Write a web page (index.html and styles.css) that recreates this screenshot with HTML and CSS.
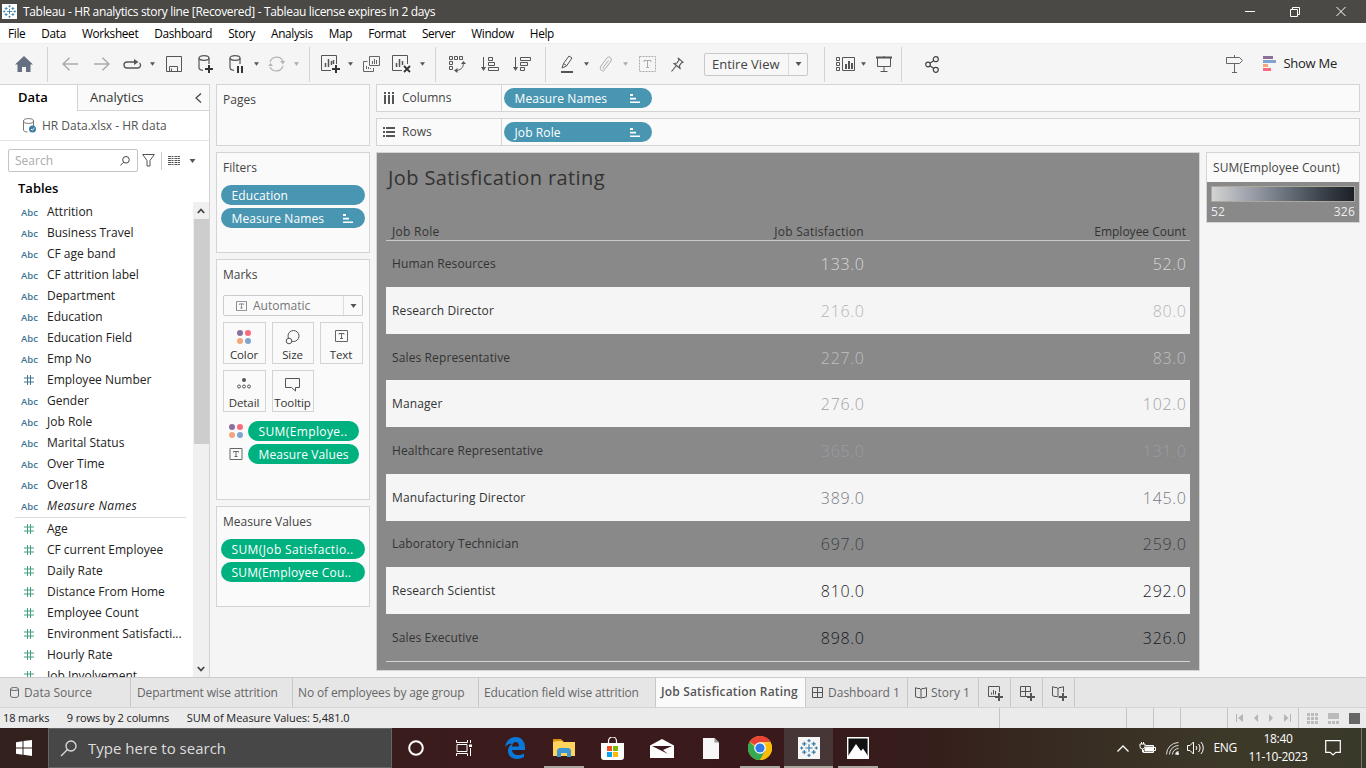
FILE: index.html
```html
<!DOCTYPE html>
<html lang="en"><head><meta charset="utf-8"><title>Tableau</title><link rel="stylesheet" href="styles.css"></head>
<body>
<svg width="0" height="0" class="defs"><defs>
<symbol id="caret" viewBox="0 0 6 4"><path d="M0 0h6L3 4z" fill="#555"/></symbol>
<symbol id="hash" viewBox="0 0 10 10"><path d="M3.5 0v10M6.5 0v10M0 3h10M0 7h10" fill="none" stroke="currentColor"/></symbol>
<symbol id="sortmini" viewBox="0 0 10 9"><path d="M0 0h3v2H0zM0 3.7h6v1.8H0zM0 7.5h10V9H0z" fill="#fff"/></symbol>
<symbol id="tbox" viewBox="0 0 13 12"><path d="M.5.5h12v11H.5z" fill="none" stroke="currentColor"/><path d="M4 4.5V3.5h5v1M6.5 3.5v5M5 8.5h3" fill="none" stroke="currentColor"/></symbol>
<symbol id="dots" viewBox="0 0 14 14"><circle cx="3" cy="3" r="3" fill="#8a7199"/><circle cx="11" cy="3" r="3" fill="#f96a7c"/><circle cx="3" cy="11" r="3" fill="#f2a679"/><circle cx="11" cy="11" r="3" fill="#82a3cc"/></symbol>
<symbol id="tableau" viewBox="0 0 18 18"><path d="M9 5.5v7M5.500 9h7M4.500 3v4M2.500 5h4M13.500 3v4M11.500 5h4M4.500 11v4M2.500 13h4M13.500 11v4M11.500 13h4M9 .5v3M7.500 2h3M9 14.500v3M7.500 16h3M.5 9h3M2 7.500v3M14.500 9h3M16 7.500v3" stroke="#377ba3" stroke-width="1.100"/></symbol>
</defs></svg>
<header class="titlebar"><svg class="logo" width="15" height="15" viewBox="-1 -1 20 20"><use href="#tableau" width="18" height="18"/></svg><span class="wtitle">Tableau - HR analytics story line [Recovered] - Tableau license expires in 2 days</span>
<svg class="winbtns" width="110" height="12" viewBox="0 0 110 12" fill="none" stroke="#fff"><path d="M0 5.500h10"/><path d="M45.500 3.500h7v7h-7zM47.500 3.500v-2h7v7h-2"/><path d="M91.500 1l9 9M100.500 1l-9 9"/></svg></header>
<nav class="menubar"><span>File</span><span>Data</span><span>Worksheet</span><span>Dashboard</span><span>Story</span><span>Analysis</span><span>Map</span><span>Format</span><span>Server</span><span>Window</span><span>Help</span></nav>
<div class="toolbar">
<i class="c47"><svg width="18" height="16"><path d="M9 0l9 8.500h-2.500V16h-4.500v-5h-4v5H2.500V8.500H0z" fill="#657180"/></svg></i><b class="sep"></b>
<i class="c32 gap6"><svg width="16" height="14" fill="none" stroke="#aaa" stroke-width="1.500"><path d="M16 7H1M7.500.7L1 7l6.500 6.300"/></svg></i>
<i class="c32"><svg width="16" height="14" fill="none" stroke="#aaa" stroke-width="1.500"><path d="M0 7h15M8.500.7L15 7l-6.500 6.300"/></svg></i>
<i class="c28"><svg width="19" height="10" fill="none" stroke="#555" stroke-width="1.300"><path d="M12 3H4a2.800 2.800 0 000 6h11a2.800 2.800 0 001.500-5"/><path d="M11 0l4.500 3L11 6z" fill="#555" stroke="none"/></svg></i>
<i class="c12"><svg width="5" height="4"><use href="#caret"/></svg></i>
<i class="c32"><svg width="16" height="16" fill="none" stroke="#555"><path d="M.5.5h15v15H.5zM3.500 15v-4.500h8V15M5.500 12.500v3"/></svg></i>
<i class="c32"><svg width="16" height="18" fill="none" stroke="#555" stroke-width="1.200"><ellipse cx="6" cy="3" rx="5" ry="2.300"/><path d="M1 3v10c0 1 1.500 2 4 2.300M11 3v6"/><path d="M11 10v8M7 14h8" stroke="#333" stroke-width="2"/></svg></i>
<i class="c28"><svg width="14" height="18" fill="none" stroke="#555" stroke-width="1.200"><ellipse cx="6" cy="3" rx="5" ry="2.300"/><path d="M1 3v10c0 1 1.500 2 4 2.300M11 3v6"/><path d="M9 11v7M13 11v7" stroke="#333" stroke-width="2"/></svg></i>
<i class="c12"><svg width="5" height="4"><use href="#caret"/></svg></i>
<i class="c28"><svg width="17" height="16" fill="none" stroke="#b5b5b5" stroke-width="1.200"><path d="M2 6a7 7 0 0113-1M15 10A7 7 0 012 11"/><path d="M12 5h5l-2 3.500zM0 10h5L2.500 7z" fill="#b5b5b5" stroke="none"/></svg></i>
<i class="c12 dim"><svg width="5" height="4"><use href="#caret"/></svg></i>
<b class="sep ml7"></b>
<i class="c28 gap6"><svg width="19" height="18" fill="none" stroke="#555"><path d="M15.500 9V.5H.5v15H10"/><path d="M4.500 12V8M7.500 12V4M10.500 10V6M12.500 9V5" stroke-width="1.500"/><path d="M15 10v8M11 14h8" stroke="#333" stroke-width="2"/></svg></i>
<i class="c12"><svg width="5" height="4"><use href="#caret"/></svg></i>
<i class="c30"><svg width="17" height="16" fill="none" stroke="#666"><path d="M6.500.5h10v9h-10zM4.500 5.500h-4v10h10V12M9.500 8V5M11.500 8V3M13.500 8V4M3.500 13v-3M5.500 13v-2M7.500 13v-1"/></svg></i>
<i class="c30"><svg width="19" height="18" fill="none" stroke="#555"><path d="M15.500 9V.5H.5v15H10"/><path d="M4.500 12V8M7.500 12V4M10.500 10V6" stroke-width="1.500"/><path d="M12 11l6 6M18 11l-6 6" stroke="#333" stroke-width="1.800"/></svg></i>
<i class="c12"><svg width="5" height="4"><use href="#caret"/></svg></i>
<b class="sep ml7"></b>
<i class="c30 gap6"><svg width="17" height="17" fill="none" stroke="#555"><path d="M.5.5h3v3h-3zM5.500.5h3v3h-3zM10.500.5h3v3h-3zM.5 5.500h3v3h-3zM.5 10.500h3v3h-3zM6 14.500c5 0 8.500-2 8.500-8"/><path d="M12 8l2.500-3L17 8zM8.500 12v5L5 14.500z" fill="#555" stroke="none"/></svg></i>
<i class="c30 gap3"><svg width="18" height="15" fill="none" stroke="#555"><path d="M2.500 0v12M7.500.5h4v3h-4zM7.500 5.500h6v3h-6zM7.500 10.500h10v3h-10z"/><path d="M0 10h5l-2.500 4z" fill="#555" stroke="none"/></svg></i>
<i class="c30 gap2"><svg width="18" height="15" fill="none" stroke="#555"><path d="M2.500 0v12M7.500.5h10v3h-10zM7.500 5.500h7v3h-7zM7.500 10.500h4v3h-4z"/><path d="M0 10h5l-2.500 4z" fill="#555" stroke="none"/></svg></i>
<b class="sep ml8"></b>
<i class="c28 gap7"><svg width="12" height="18" fill="none" stroke="#555"><path d="M1 13l1.500-4.500L8 1l3 2-5.500 8zM2.500 8.500l3 2"/><path d="M0 17h12" stroke-width="2"/></svg></i>
<i class="c11"><svg width="5" height="4"><use href="#caret"/></svg></i>
<i class="c27"><svg width="14" height="16" fill="none" stroke="#aaa"><path d="M9.500 4.500L4.500 11c-1 2 1 3 2 1.500L12 5c1.500-3-2-5.500-4-3L2 10c-2 3 .5 6 3.500 4.500"/></svg></i>
<i class="c12 dim"><svg width="5" height="4"><use href="#caret"/></svg></i>
<i class="c33"><svg width="17" height="16" fill="none" stroke="#aaa"><path d="M.5.5h16v15H.5z" stroke-dasharray="2 1"/><path d="M5 6V4.500h7V6M8.500 4.500v7M7 11.500h3"/></svg></i>
<i class="c27"><svg width="13" height="15" fill="none" stroke="#555" stroke-width="1.100"><path d="M7 .8l5 4.500-1.500.5-2 2.500.5 3L3 6.500l3-.5 2-3zM5 9l-4.500 5.500"/></svg></i>
<div class="combo"><span>Entire View</span><em><svg width="7" height="4"><use href="#caret"/></svg></em></div>
<b class="sep ml16"></b>
<i class="c27 gap7"><svg width="20" height="15" fill="none" stroke="#555"><path d="M.5.5h3v3h-3zM.5 5.500h3v3h-3zM.5 10.500h3v3h-3zM6.500.5h12v13h-12z"/><path d="M10 12V7M13 12V4M16 12V6" stroke-width="2"/></svg></i>
<i class="c8"><svg width="5" height="4"><use href="#caret"/></svg></i>
<i class="c34"><svg width="16" height="16" fill="none" stroke="#555"><path d="M0 1.500h16" stroke-width="2"/><path d="M1.500 2v8.500h13V2M8 10v5M4.500 15.500h7M8 0v1"/></svg></i>
<b class="sep"></b>
<i class="c28 gap17"><svg width="14" height="17" fill="none" stroke="#444" stroke-width="1.200"><circle cx="3" cy="8.500" r="2.300"/><circle cx="10.800" cy="3.200" r="2.500"/><circle cx="10.800" cy="13.800" r="2.500"/><path d="M5 7.200l3.500-2.500M5 9.800l3.500 2.500"/></svg></i>
<div class="showme"><svg width="18" height="18" fill="none" stroke="#666"><path d="M.5 2.500h13l3 3-3 3H.5zM8.500 0v2M8.500 9v8M6 17.500h5"/></svg><svg width="14" height="16"><path d="M0 0h10v3H0z" fill="#8a7199"/><path d="M0 4h13v3H0z" fill="#82a3cc"/><path d="M0 8h5v3H0z" fill="#f2a679"/><path d="M0 12h8v3H0z" fill="#f96a7c"/></svg><span>Show Me</span></div>
</div>
<main class="main">
<aside class="data">
<div class="dtabs"><span class="on">Data</span><span class="off">Analytics<svg width="7" height="10" fill="none" stroke="#444" stroke-width="1.200"><path d="M6 .5L1 5l5 4.500"/></svg></span></div>
<div class="source"><svg width="14" height="15" fill="none" stroke="#777"><ellipse cx="5.500" cy="3" rx="5" ry="2.400"/><path d="M.5 3v9c0 1 1.500 2 4 2M10.500 3v5"/><circle cx="9.500" cy="11" r="3.500" fill="#3a7ca5" stroke="none"/><path d="M8 11l1.200 1.200L11.500 10" stroke="#fff"/></svg><span>HR Data.xlsx - HR data</span></div>
<div class="searchrow"><div class="search"><span>Search</span><svg width="10" height="10" fill="none" stroke="#444"><circle cx="6" cy="3.800" r="3.300"/><path d="M3.500 6.300L.3 9.500"/></svg></div><svg class="funnel" width="13" height="13" fill="none" stroke="#555"><path d="M.7.5h11.600L8 6.500v5.500H5V6.500z"/></svg><b></b><svg class="grid" width="13" height="10" stroke="#555"><path d="M0 .5h13M0 2.500h13M0 4.500h13M0 6.500h13M0 8.500h13" stroke-dasharray="3 .5 2 1"/></svg><svg width="7" height="4"><use href="#caret"/></svg></div>
<h3>Tables</h3>
<div class="listwrap"><ul class="fields">
<li><b>Abc</b>Attrition</li><li><b>Abc</b>Business Travel</li><li><b>Abc</b>CF age band</li><li><b>Abc</b>CF attrition label</li><li><b>Abc</b>Department</li><li><b>Abc</b>Education</li><li><b>Abc</b>Education Field</li><li><b>Abc</b>Emp No</li><li><b><svg width="10" height="10"><use href="#hash"/></svg></b>Employee Number</li><li><b>Abc</b>Gender</li><li><b>Abc</b>Job Role</li><li><b>Abc</b>Marital Status</li><li><b>Abc</b>Over Time</li><li><b>Abc</b>Over18</li><li class="it"><b>Abc</b>Measure Names</li><li class="rule"></li>
<li class="m"><b><svg width="10" height="10"><use href="#hash"/></svg></b>Age</li><li class="m"><b><svg width="10" height="10"><use href="#hash"/></svg></b>CF current Employee</li><li class="m"><b><svg width="10" height="10"><use href="#hash"/></svg></b>Daily Rate</li><li class="m"><b><svg width="10" height="10"><use href="#hash"/></svg></b>Distance From Home</li><li class="m"><b><svg width="10" height="10"><use href="#hash"/></svg></b>Employee Count</li><li class="m"><b><svg width="10" height="10"><use href="#hash"/></svg></b>Environment Satisfacti...</li><li class="m"><b><svg width="10" height="10"><use href="#hash"/></svg></b>Hourly Rate</li><li class="m"><b><svg width="10" height="10"><use href="#hash"/></svg></b>Job Involvement</li></ul>
<div class="scroll"><svg width="8" height="6" fill="none" stroke="#444" stroke-width="1.800"><path d="M.8 5L4 1.500 7.200 5"/></svg><i></i><svg width="8" height="6" fill="none" stroke="#444" stroke-width="1.800"><path d="M.8 1L4 4.500 7.200 1"/></svg></div></div>
</aside>
<section class="cards">
<div class="card pages"><h4>Pages</h4></div>
<div class="card filters"><h4>Filters</h4><div class="pill blue">Education</div><div class="pill blue">Measure Names<svg width="10" height="9"><use href="#sortmini"/></svg></div></div>
<div class="card marks"><h4>Marks</h4><div class="mtype"><svg width="11" height="10"><use href="#tbox"/></svg><span>Automatic</span><em><svg width="7" height="4"><use href="#caret"/></svg></em></div>
<div class="mgrid"><div><svg width="14" height="14"><use href="#dots"/></svg>Color</div><div><svg width="15" height="15" fill="none" stroke="#555"><circle cx="8.500" cy="6" r="5.500"/><circle cx="4" cy="11" r="2.800" fill="#fafafa"/></svg>Size</div><div><svg class="tg" width="13" height="12"><use href="#tbox"/></svg>Text</div><div><svg width="14" height="11" fill="none" stroke="#555"><circle cx="7" cy="2" r="2" fill="#555" stroke="none"/><circle cx="2" cy="8.500" r="1.500"/><circle cx="7" cy="8.500" r="1.500"/><circle cx="12" cy="8.500" r="1.500"/></svg>Detail</div><div><svg width="15" height="14" fill="none" stroke="#555"><path d="M.5.500h14v9h-4v3.500l-4-3.500h-6z"/></svg>Tooltip</div></div>
<div class="mrow"><svg width="14" height="14"><use href="#dots"/></svg><div class="pill green w2">SUM(Employe..</div></div>
<div class="mrow"><svg class="tg" width="13" height="12"><use href="#tbox"/></svg><div class="pill green">Measure Values</div></div></div>
<div class="card mv"><h4>Measure Values</h4><div class="pill green w2">SUM(Job Satisfactio..</div><div class="pill green w1">SUM(Employee Cou..</div></div>
</section>
<section class="work">
<div class="shelf"><div><svg width="12" height="12" stroke="#555" stroke-width="2"><path d="M2 0v2M6 0v2M10 0v2M2 3v9M6 3v9M10 3v9"/></svg>Columns</div><div class="pill blue">Measure Names<svg width="10" height="9"><use href="#sortmini"/></svg></div></div>
<div class="shelf"><div><svg width="12" height="10" stroke="#555" stroke-width="2"><path d="M0 1h2M0 5h2M0 9h2M3 1h9M3 5h9M3 9h9"/></svg>Rows</div><div class="pill blue">Job Role<svg width="10" height="9"><use href="#sortmini"/></svg></div></div>
<div class="viewrow"><article class="viz"><h1>Job Satisfication rating</h1>
<div class="thead"><span>Job Role</span><span>Job Satisfaction</span><span>Employee Count</span></div>
<div class="tbody">
<div class="r n1"><span>Human Resources</span><span>133.0</span><span>52.0</span></div>
<div class="r n2"><span>Research Director</span><span>216.0</span><span>80.0</span></div>
<div class="r n3"><span>Sales Representative</span><span>227.0</span><span>83.0</span></div>
<div class="r n4"><span>Manager</span><span>276.0</span><span>102.0</span></div>
<div class="r n5"><span>Healthcare Representative</span><span>365.0</span><span>131.0</span></div>
<div class="r n6"><span>Manufacturing Director</span><span>389.0</span><span>145.0</span></div>
<div class="r n7"><span>Laboratory Technician</span><span>697.0</span><span>259.0</span></div>
<div class="r n8"><span>Research Scientist</span><span>810.0</span><span>292.0</span></div>
<div class="r n9"><span>Sales Executive</span><span>898.0</span><span>326.0</span></div>
</div></article>
<div class="legend"><h4>SUM(Employee Count)</h4><div class="lg"><div class="ramp"></div><p><span>52</span><span>326</span></p></div></div></div>
</section>
</main>
<div class="tabs">
<div class="t1"><svg width="9" height="11" fill="none" stroke="#666"><path d="M.5 2v7c0 2 8 2 8 0V2c0-2-8-2-8 0zM.5 2c0 2 8 2 8 0"/></svg>Data Source</div><div class="t2">Department wise attrition</div><div class="t3">No of employees by age group</div><div class="t4">Education field wise attrition</div><div class="t5">Job Satisfication Rating</div><div class="t6"><svg width="11" height="11" fill="none" stroke="#555"><path d="M.5.5h10v10H.5zM5.500 0v11M0 5.500h11"/></svg>Dashboard 1</div><div class="t7"><svg width="12" height="12" fill="none" stroke="#555"><path d="M.5.700L3 1.500h2L6 3l1-1.500h2l2.500-.8v9L9 10.500H7l-1 1-1-1H3l-2.500-.8zM6 3v8"/></svg>Story 1</div>
<div class="ta"><svg width="16" height="15" fill="none" stroke="#555"><path d="M11.500 6V.5H.5v10H7M3.500 8.500v-2M5.500 8.500V4M7.500 8.500V5"/><path d="M11 7v8M7 11h8" stroke-width="2"/></svg></div><div class="ta"><svg width="16" height="15" fill="none" stroke="#555"><path d="M10.500 6V.5H.5v10H7M5.500 0v10M0 5.500h10"/><path d="M11 7v8M7 11h8" stroke-width="2"/></svg></div><div class="ta"><svg width="16" height="15" fill="none" stroke="#555"><path d="M11.500 6V.7L9 1.500H7L6 3 5 1.500H3L.5.7v9l2.500.8h2l1 1M6 3v8"/><path d="M11 7v8M7 11h8" stroke-width="2"/></svg></div>
</div>
<div class="status"><span>18 marks</span><span>9 rows by 2 columns</span><span class="sum">SUM of Measure Values: 5,481.0</span><div class="cells"><i></i><i></i><i></i><i></i><i><svg width="56" height="8" fill="#b5b5b5"><path d="M0 0h1v8H0zM7 0v8L2 4zM22 0v8l-4-4zM33 0v8l4-4zM48 0v8l4.500-4zM54 0h1v8h-1z"/></svg></i><i><svg width="54" height="11" fill="#bbb"><path d="M0 0h3v3H0zM4 0h3v3H4zM8 0h3v3H8zM0 4h3v3H0zM4 4h3v3H4zM8 4h3v3H8zM0 8h3v3H0zM4 8h3v3H4zM8 8h3v3H8zM21 0h11v6H21zM21 8h3v3h-3zM25 8h3v3h-3zM29 8h3v3h-3z"/><path d="M42 0h11v11H42z" fill="#666"/></svg></i></div></div>
<footer class="task"><div class="start"><svg width="16" height="16" fill="#fff"><path d="M0 2.300L6.500 1.300v6.300H0zM7.500 1.100L16 0v7.600H7.500zM0 8.500h6.500v6.200L0 13.800zM7.500 8.500H16V16l-8.500-1.200z"/></svg></div>
<div class="tsearch"><svg width="17" height="17" fill="none" stroke="#ddd" stroke-width="1.300"><circle cx="11" cy="6" r="5"/><path d="M7.500 9.500L1 16"/></svg><span>Type here to search</span></div>
<i class="a1"><svg width="16" height="16" fill="none" stroke="#fff" stroke-width="2"><circle cx="8" cy="8" r="6.800"/></svg></i>
<i class="a2"><svg width="17" height="16" fill="none" stroke="#fff"><path d="M1 4.500h10v7H1zM.5 0v2.500h11V0M.5 16v-2.500h11V16M14.500 0v3M14.500 8v8"/><path d="M13 4.500h3v2.500h-3z" fill="#fff" stroke="none"/></svg></i>
<i><svg width="22" height="22" viewBox="0 0 22 22"><path d="M1 10C2 4 6 0 11.500 0 18 0 21 5 21 10v3H8c0 3 3 5 6 5 2.500 0 4-.500 6-1.500V20c-2 1.300-4.500 2-7 2-6 0-9-4-9-8 0-3.500 2-6 5-7.500C6 6.500 3 7.500 1 10zM8 9.500h7C15 7 14 5 11.500 5 9.500 5 8.200 7 8 9.500z" fill="#0a78d7"/></svg></i>
<i class="run"><svg width="22" height="20"><path d="M0 2h9l1.500 2H22v14H0z" fill="#ffd35c"/><path d="M0 1h8l1.500 2H4L0 4z" fill="#d9930d"/><path d="M4 19v-7l2-2h10l2 2v7h-4v-4H8v4z" fill="#3e97d3"/></svg></i>
<i><svg width="23" height="23"><path d="M7.500 7V4a4 4 0 018 0v3" fill="none" stroke="#fff" stroke-width="1.200"/><path d="M0 6h23v14c0 2-1 3-3 3H3c-2 0-3-1-3-3z" fill="#fff"/><path d="M6 9h5v5H6z" fill="#f25022"/><path d="M12 9h5v5h-5z" fill="#7fba00"/><path d="M6 15h5v5H6z" fill="#00a4ef"/><path d="M12 15h5v5h-5z" fill="#ffb900"/></svg></i>
<i><svg width="24" height="19"><path d="M0 6.500L12 0l12 6.500V19H0z" fill="#fff"/><path d="M2 7h20l-9 4 5 4z" fill="#3b181b"/></svg></i>
<i><svg width="16" height="21"><path d="M0 0h11.500L16 4.500V21H0z" fill="#f7f7f7"/><path d="M11.500 0L16 4.500h-4.500z" fill="#999"/></svg></i>
<i class="run"><svg width="24" height="24" viewBox="0 0 24 24"><circle cx="12" cy="12" r="12" fill="#fc4"/><path d="M12 12L1.600 6A12 12 0 0122.400 6H12z" fill="#ea4335"/><path d="M1.600 6A12 12 0 0012 24l5.200-9H12z" fill="#34a853"/><path d="M12 24l5.500-9A6 6 0 0017 8.500L22.400 6A12 12 0 0112 24z" fill="#fbbc05"/><circle cx="12" cy="12" r="5.800" fill="#fff"/><circle cx="12" cy="12" r="4.600" fill="#2f7bea"/></svg></i>
<i class="run act"><svg width="22" height="22" viewBox="-1.500 -1.500 21 21"><path d="M-1.500-1.500h21v21h-21z" fill="#f6f6f6"/><use href="#tableau" width="18" height="18"/></svg></i>
<i class="run"><svg width="22" height="22"><path d="M.7.7h20.600v20.600H.7z" fill="#111" stroke="#fff" stroke-width="1.400"/><path d="M1 19l8-12 5 7 2-2.500 5 7.500v2H1z" fill="#fff"/></svg></i>
<div class="tray"><svg width="12" height="7" fill="none" stroke="#fff" stroke-width="1.300"><path d="M.5 6.500L6 1l5.500 5.500"/></svg><svg width="17" height="12" fill="none" stroke="#fff"><path d="M6.500 3.500h8v7h-10V8M15 5.500h1.500v3H15M1 2h5v2.500a2.500 2.500 0 01-5 0zM2.500 0v2M4.500 0v2M3.500 7v3h2"/><path d="M7 5h7v4H6V7z" fill="#fff"/></svg><svg class="wifi" width="13" height="13" fill="none" stroke="#ddd"><path d="M.5 12.500a12 12 0 0112-12M3.500 12.500a9 9 0 019-9M6.500 12.500a6 6 0 016-6M9.500 12.500a3 3 0 013-3"/><circle cx="11.500" cy="11.500" r="1.500" fill="#fff" stroke="none"/></svg><svg width="17" height="14" fill="none" stroke="#fff"><path d="M.5 4.500H3L6.500 1v12L3 9.500H.500zM9 5a3 3 0 010 4M11.500 3a6 6 0 010 8M14 1a9 9 0 010 12"/></svg><span class="eng">ENG</span><div class="clock">18:40<br>11-10-2023</div><svg width="16" height="16" fill="none" stroke="#fff" stroke-width="1.200"><path d="M.7.7h14.600v11.600h-4.500L8 15l-2.800-2.700H.7z"/></svg><b></b></div></footer>
</body></html>
```
FILE: styles.css
```css
*{box-sizing:border-box}
body{margin:0;width:1366px;height:768px;overflow:hidden;background:#f5f5f5;font:12px/16px "Open Sans","Noto Sans",sans-serif;color:#333;display:flex;flex-direction:column}
svg{flex:none;display:block}
.defs{position:absolute}
h1,h3,h4,p,ul{margin:0;padding:0}
i,em{font-style:normal}
.titlebar{height:23px;flex:none;background:#4a4946;color:#fff;display:flex;align-items:center;padding-left:2px;font-size:12px}
.logo{background:#fff}
.wtitle{margin-left:6px;letter-spacing:-.33px}
.winbtns{margin-left:auto;margin-right:11px}
.menubar{height:20px;flex:none;background:#fff;color:#000;display:flex;align-items:center;gap:16px;padding-left:8px;font-size:11.8px;letter-spacing:-.33px}
.toolbar{height:41px;flex:none;background:#f5f5f5;border-top:1px solid #eee;display:flex;align-items:center}
.toolbar i{display:flex;flex:none;justify-content:center;align-items:center}
.c47{width:47px}.c34{width:34px}.c33{width:33px}.c32{width:32px}.c30{width:30px}.c28{width:28px}.c27{width:27px}.c12{width:12px}.c11{width:11px}.c8{width:8px}
.gap2{margin-left:2px}.gap3{margin-left:3px}.gap6{margin-left:6px}.gap7{margin-left:7px}.gap17{margin-left:16px}
.sep{width:1px;height:35px;flex:none;background:#d4d4d4}
.ml7{margin-left:7px}.ml8{margin-left:8px}.ml16{margin-left:16px}
.dim{opacity:.45}
.combo{width:104px;height:23px;margin-left:13px;border:1px solid #c8c8c8;border-radius:2px;display:flex;font-size:13px;line-height:20px;color:#444;padding-left:7px;background:#f7f7f7}
.combo em,.mtype em{margin-left:auto;width:19px;border-left:1px solid #ddd;display:flex;align-items:center;justify-content:center}
.showme{margin-left:auto;display:flex;align-items:center;margin-right:29px;font-size:13px;letter-spacing:-.25px;color:#222}
.showme svg{margin-right:6px}.showme svg:first-child{margin-right:19px}
.showme span{padding-bottom:2px}
.main{height:593px;flex:none;display:flex}
.data{width:210px;border-right:1px solid #d4d4d4;border-top:1px solid #d4d4d4;background:#fff;display:flex;flex-direction:column}
.dtabs{height:26px;display:flex;flex:none;font-size:13px;line-height:25px}
.on{width:77px;padding-left:18px;font-weight:600;color:#000}
.off{flex:1;border-left:1px solid #d4d4d4;border-bottom:1px solid #d4d4d4;background:#fafafa;padding:0 7px 0 12px;display:flex;align-items:center;justify-content:space-between}
.source{height:30px;flex:none;border-bottom:1px solid #e3e3e3;display:flex;align-items:center;padding-left:23px;gap:5px;color:#555}
.searchrow{height:23px;flex:none;margin:8px 0 0 8px;display:flex;align-items:center}
.search{width:130px;height:23px;border:1px solid #c4c4c4;border-radius:2px;display:flex;align-items:center;justify-content:space-between;padding:0 7px 0 6px;color:#aaa}
.funnel{margin-left:4px}.searchrow b{width:1px;height:18px;background:#ccc;margin:0 6px}
.grid{margin-right:8px}
.data h3{font-size:13px;line-height:18px;font-weight:600;color:#000;padding:7px 0 0 18px;height:30px;flex:none}
.listwrap{flex:1;display:flex;min-height:0;overflow:hidden}
.fields{list-style:none;width:193px;color:#222;overflow:hidden;margin-top:-1px}
.fields li{height:21px;line-height:21px;display:flex;align-items:center;white-space:nowrap}
.fields b{width:47px;padding:1px 0 0 21px;font-size:9.5px;font-weight:600;color:#3f7593}
.fields b svg{margin-left:3px}
.fields .m b{color:#3fa07c}
.it{font-style:italic;letter-spacing:.35px}.it b{font-style:normal;letter-spacing:0}
.fields .rule{height:1px;background:#ddd;margin:1px 7px 0 15px}
.scroll{width:16px;background:#f0f0f0;display:flex;flex-direction:column;align-items:center;padding:6px 0 5px}
.scroll i{width:15px;height:225px;background:#cdcdcd;margin:5px 0 auto}
.cards{width:154px;margin-left:6px;display:flex;flex-direction:column;gap:6px}
.card{border:1px solid #d4d4d4;background:#fafafa;padding:7px 4px}
h4{font-weight:400;font-size:12px;line-height:16px;color:#444}
.card h4{padding-left:2px}
.pages{height:62px}.filters{height:101px}.marks{height:241px}.mv{height:101px}
.pill{height:20px;border-radius:10px;color:#fff;font-weight:500;padding:0 12px 0 10.500px;font-size:12px;line-height:19px;display:flex;align-items:center;justify-content:space-between;letter-spacing:.1px;white-space:nowrap}
.w2{letter-spacing:.38px}.w1{letter-spacing:.2px}
.blue{background:#4996b2}.green{background:#00b180}
.card>.pill{margin-bottom:3px}.card h4+.pill{margin-top:9px}
.mtype{height:21px;margin:12px 2px 0;border:1px solid #ccc;border-radius:2px;display:flex;align-items:center;padding-left:12px;gap:6px;color:#777}
.mtype em{height:19px;width:19px}
.tg{color:#666}
.mgrid{margin:6px 2px 0;display:grid;grid-template-columns:43px 42px 43px;gap:6px;color:#333}
.mgrid div{height:42px;border:1px solid #d4d4d4;display:flex;flex-direction:column;align-items:center;justify-content:space-between;padding:7px 1px 1px 0;font-size:11.5px;line-height:15px;letter-spacing:-.1px}
.mrow{display:flex;align-items:center;margin:3px 6px 0 8px;gap:5px}
.mrow svg{width:14px}.mgrid+.mrow{margin-top:9px}
.mrow .pill{width:111px;padding-right:0}
.work{margin-left:6px;width:984px;display:flex;flex-direction:column}
.shelf{height:28px;border:1px solid #d4d4d4;background:#fafafa;margin-bottom:6px;display:flex;align-items:center}
.shelf>div:first-child{width:125px;height:26px;border-right:1px solid #d4d4d4;display:flex;align-items:center;gap:7px;padding-left:6px;color:#444}
.shelf .pill{width:148px;margin-left:2px}
.viewrow{display:flex;gap:6px;align-items:flex-start}
.viz{width:824px;height:519px;border:1px solid #d4d4d4;background:#898989;padding:12px 9px 8px}
.viz h1{font-size:20px;line-height:26px;font-weight:500;color:#333;letter-spacing:.4px;padding-left:2px;height:58px}
.thead,.r{display:grid;grid-template-columns:152px 320px 322px;padding-left:6px}
.thead{height:18px;border-bottom:1px solid #c8c8c8;line-height:18px;color:#333;letter-spacing:.27px}
.thead span:last-child{letter-spacing:0}
.thead span:nth-child(n+2),.r span:nth-child(n+2){text-align:right}
.tbody{display:grid;grid-template-rows:46px repeat(7,46.72px) 1fr;height:421px;border-bottom:1px solid #d4d4d4}
.r{align-items:center;letter-spacing:.12px}
.r:nth-child(n+2){padding-top:1px}
.r:nth-child(even){background:#f5f5f5}
.r span:first-child{white-space:nowrap}
.n1{--c:#d8d8d8}.n2{--c:#b4b4b6}.n3{--c:#c0c0c2}.n4{--c:#a1a2a5}.n5{--c:#9a9ca4}.n6{--c:#777b83}.n7{--c:#3a3f46}.n8{--c:#1c2027}.n9{--c:#15181d}
.r span:nth-child(n+2){font-size:16px;font-weight:300;letter-spacing:.7px;margin-right:-.7px;color:var(--c)}
.legend{width:154px;border:1px solid #d4d4d4;background:#fafafa}
.legend h4{height:29px;line-height:29px;padding-left:6px;letter-spacing:.1px}
.lg{background:#898989;padding:4px 4px 0;height:40px;color:#eee}
.ramp{height:16px;border:1px solid #aaa99c;background:linear-gradient(90deg,#d3d3d3,#9a9ea8 28%,#69717b 52%,#3b434b 77%,#1c1f27)}
.lg p{display:flex;justify-content:space-between;line-height:20px;letter-spacing:.2px}
.tabs{height:31px;flex:none;background:#e6e6e6;border-top:1px solid #ccc;border-bottom:1px solid #d4d4d4;display:flex;color:#666}
.tabs>div{border-right:1px solid #c8c8c8;display:flex;align-items:center;gap:5px;padding-left:6px;white-space:nowrap}
.tabs .t1{width:131px;padding-left:10px}.t2{width:162px}.t3{width:186px}.t4{width:177px}.tabs .t5{width:150px;background:#fafafa;font-weight:600;letter-spacing:.17px;color:#555;padding:0 0 2px 5px}.t6{width:102px}.t7{width:71px}.tabs .ta{width:32px;padding:2px 0 0 9px}
.t2,.t3,.t4{letter-spacing:-.14px}.tabs .t3,.tabs .t4{padding-left:5px}
.tabs .t7{padding-left:7px;gap:4px}
.status{height:20px;flex:none;background:#ebebeb;display:flex;align-items:center;font-size:11px;letter-spacing:-.12px;color:#222;padding-left:3px;gap:17.500px}
.sum{letter-spacing:-.05px}
.cells{display:flex;height:20px;margin-left:auto}
.cells i{border-left:1px solid #c4c4c4;width:27px;display:flex;align-items:center;padding-left:8px}
.cells i:first-child{width:127px}.cells i:nth-child(4){width:47px}.cells i:nth-child(5){width:71px}.cells i:nth-child(6){width:68px}
.task{height:40px;flex:none;background:linear-gradient(90deg,#32211d,#3b1b1c 35%,#39191b 58%,#351d1b 67%,#372c22 78%,#3d3929 90%,#39392a);display:flex;align-items:center}
.start{width:48px;display:flex;justify-content:center}
.tsearch{width:344px;height:40px;border:1px solid #666;background:#474747;display:flex;align-items:center;padding-left:11px;gap:11px;font-size:15px;color:#ddd}
.task>i{width:49px;height:40px;display:flex;align-items:center;justify-content:center}
.task>.a1{width:48px}.task>.a2{width:50px;padding-right:2px}
.run{background:linear-gradient(#aaa89f,#aaa89f) center bottom/40px 2px no-repeat}
.act{background-color:#473636;background-size:100% 2px}
.tray{margin-left:auto;display:flex;align-items:center;color:#fff;height:40px}
.tray svg{margin-right:10px}.tray .wifi{margin-right:8px}
.eng{margin:0 10px 0 -1px;letter-spacing:-.3px}
.clock{width:62px;text-align:center;line-height:18px;margin-right:16px;letter-spacing:-.35px;white-space:nowrap}
.tray b{width:1px;height:40px;background:#777;margin:0 4px 0 10px}
```
